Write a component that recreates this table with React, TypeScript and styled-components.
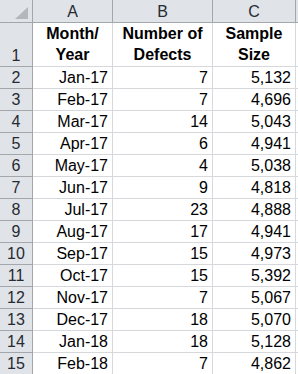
import React from 'react';
import styled, { createGlobalStyle } from 'styled-components';

const GlobalStyle = createGlobalStyle`
  html, body {
    margin: 0;
    padding: 0;
    background: #ffffff;
  }
`;

const HEAD_BG = '#e0e3e7';
const HEAD_LINE = '#a3a6aa';
const GRID_LINE = '#d6d8db';

const Sheet = styled.div`
  display: grid;
  grid-template-columns: 33px 80px 100px 83px 1fr;
  grid-template-rows: 23px 44px;
  grid-auto-rows: 22px;
  width: 298px;
  height: 374px;
  overflow: hidden;
  font-family: 'Liberation Sans', Arial, sans-serif;
  font-size: 16px;
  color: #000;
`;

const Corner = styled.div`
  position: relative;
  background: ${HEAD_BG};
  border-right: 1px solid ${HEAD_LINE};
  border-bottom: 1px solid ${HEAD_LINE};
`;

const CornerMark = styled.div`
  position: absolute;
  right: 4px;
  bottom: 3px;
  width: 0;
  height: 0;
  border-left: 13px solid transparent;
  border-bottom: 12px solid #b4b8bd;
`;

const ColHead = styled.div`
  display: flex;
  align-items: center;
  justify-content: center;
  background: ${HEAD_BG};
  border-right: 1px solid ${HEAD_LINE};
  border-bottom: 1px solid ${HEAD_LINE};
  color: #262b33;
  font-size: 16px;
  padding-top: 1px;
`;

const RowHead = styled.div`
  display: flex;
  align-items: flex-end;
  justify-content: center;
  background: ${HEAD_BG};
  border-right: 1px solid ${HEAD_LINE};
  border-bottom: 1px solid ${HEAD_LINE};
  color: #262b33;
  font-size: 16px;
  line-height: 19px;
  padding-bottom: 1px;
  box-sizing: border-box;
`;

const Cell = styled.div<{ $head?: boolean }>`
  display: flex;
  flex-direction: column;
  justify-content: flex-end;
  align-items: ${(p) => (p.$head ? 'center' : 'flex-end')};
  text-align: ${(p) => (p.$head ? 'center' : 'right')};
  font-weight: ${(p) => (p.$head ? 700 : 400)};
  line-height: ${(p) => (p.$head ? '21px' : '19px')};
  padding: ${(p) => (p.$head ? '0 2px 1px' : '0 4px 1px 2px')};
  border-right: 1px solid ${GRID_LINE};
  border-bottom: 1px solid ${GRID_LINE};
  white-space: nowrap;
  box-sizing: border-box;
`;

type Row = [string, number, string];

const rows: Row[] = [
  ['Jan-17', 7, '5,132'],
  ['Feb-17', 7, '4,696'],
  ['Mar-17', 14, '5,043'],
  ['Apr-17', 6, '4,941'],
  ['May-17', 4, '5,038'],
  ['Jun-17', 9, '4,818'],
  ['Jul-17', 23, '4,888'],
  ['Aug-17', 17, '4,941'],
  ['Sep-17', 15, '4,973'],
  ['Oct-17', 15, '5,392'],
  ['Nov-17', 7, '5,067'],
  ['Dec-17', 18, '5,070'],
  ['Jan-18', 18, '5,128'],
  ['Feb-18', 7, '4,862']
];

const App = (): JSX.Element => (
  <>
    <GlobalStyle />
    <Sheet>
      <Corner>
        <CornerMark />
      </Corner>
      <ColHead>A</ColHead>
      <ColHead>B</ColHead>
      <ColHead>C</ColHead>
      <ColHead />

      <RowHead>1</RowHead>
      <Cell $head>
        <span>Month/</span>
        <span>Year</span>
      </Cell>
      <Cell $head>
        <span>Number of</span>
        <span>Defects</span>
      </Cell>
      <Cell $head>
        <span>Sample</span>
        <span>Size</span>
      </Cell>
      <Cell />

      {rows.map((r, i) => (
        <React.Fragment key={r[0]}>
          <RowHead>{i + 2}</RowHead>
          <Cell>{r[0]}</Cell>
          <Cell>{r[1]}</Cell>
          <Cell>{r[2]}</Cell>
          <Cell />
        </React.Fragment>
      ))}
    </Sheet>
  </>
);

export default App;
